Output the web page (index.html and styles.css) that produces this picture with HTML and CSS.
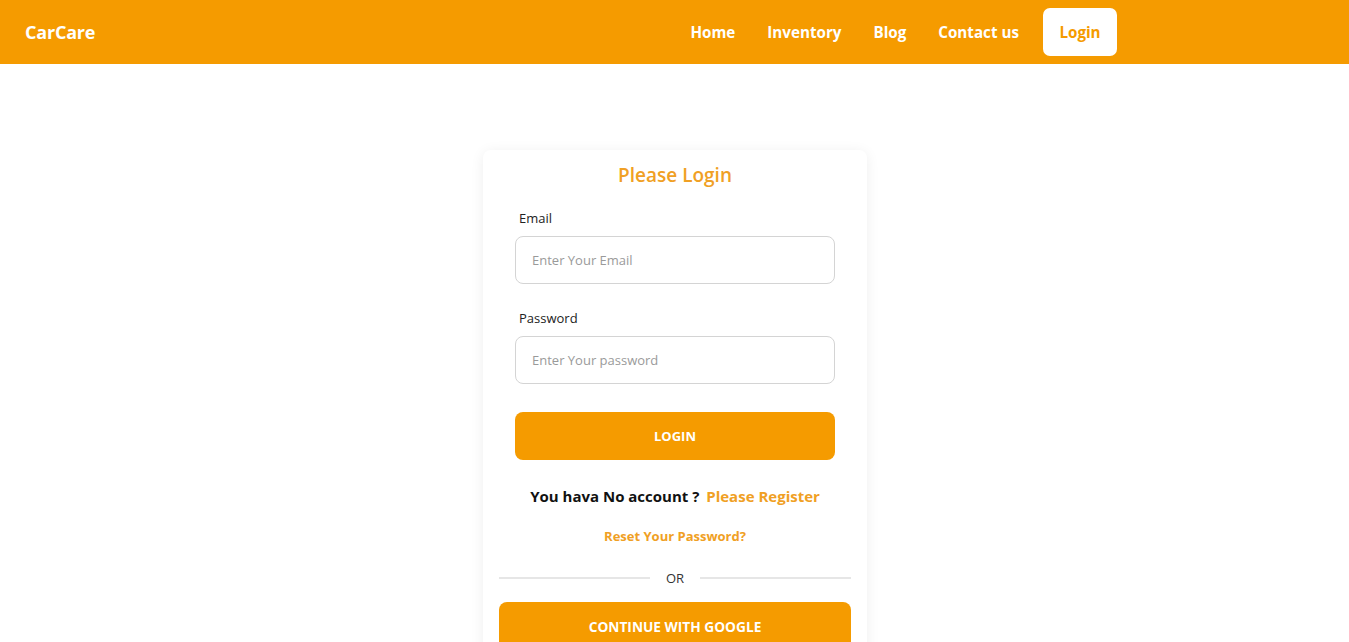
FILE: index.html
```html
<!DOCTYPE html>
<html>
<head>
<meta charset="utf-8">
<link rel="stylesheet" href="styles.css">
</head>
<body>
<header class="navbar">
  <div class="brand">CarCare</div>
  <nav class="nav">
    <a class="nav-link" href="#">Home</a>
    <a class="nav-link" href="#">Inventory</a>
    <a class="nav-link" href="#">Blog</a>
    <a class="nav-link" href="#">Contact us</a>
    <a class="nav-login" href="#">Login</a>
  </nav>
</header>
<main class="main">
  <section class="card">
    <h2 class="title">Please Login</h2>
    <form class="form">
      <label class="label">Email</label>
      <input class="input" type="email" placeholder="Enter Your Email">
      <label class="label label-pw">Password</label>
      <input class="input" type="password" placeholder="Enter Your password">
      <button class="btn btn-login" type="button">LOGIN</button>
    </form>
    <p class="register">You hava No account ? <a class="orange" href="#">Please Register</a></p>
    <p class="reset"><a class="orange" href="#">Reset Your Password?</a></p>
    <div class="divider"><span class="line"></span><span class="or">OR</span><span class="line"></span></div>
    <button class="btn btn-google" type="button">CONTINUE WITH GOOGLE</button>
  </section>
</main>
</body>
</html>
```
FILE: styles.css
```css
* { box-sizing: border-box; }
html, body { margin: 0; padding: 0; }
body {
  font-family: "Open Sans", "Noto Sans", sans-serif;
  background: #fff;
  color: #222;
  overflow: hidden;
  height: 642px;
}
.navbar {
  height: 64px;
  background: #f59b00;
  display: flex;
  align-items: center;
  padding: 0 0 0 25px;
}
.brand {
  color: #fff;
  font-weight: 700;
  font-size: 18px;
  letter-spacing: -0.2px;
}
.nav {
  margin-left: auto;
  margin-right: 232px;
  display: flex;
  align-items: center;
}
.nav-link {
  color: #fff;
  text-decoration: none;
  font-weight: 700;
  font-size: 15.2px;
  margin-right: 32px;
}
.nav-login {
  background: #fff;
  color: #f59b00;
  text-decoration: none;
  font-weight: 700;
  font-size: 15.2px;
  height: 48px;
  width: 74px;
  border-radius: 7px;
  display: flex;
  align-items: center;
  justify-content: center;
  margin-left: -8px;
}
.main {
  display: flex;
  justify-content: center;
  padding-top: 86px;
}
.card {
  width: 384px;
  margin-left: 1px;
  background: #fff;
  box-shadow: 0 2px 14px rgba(0,0,0,0.07);
  border-radius: 8px;
  padding: 12px 16px 40px;
  text-align: center;
}
.title {
  margin: 0;
  color: #f0a024;
  font-size: 19px;
  font-weight: 600;
  line-height: 26px;
}
.form {
  padding: 0 16px;
  display: flex;
  flex-direction: column;
  text-align: left;
  margin-top: 21px;
}
.label {
  font-size: 13px;
  color: #222;
  padding-left: 4px;
  line-height: 18px;
  margin-bottom: 9px;
}
.label-pw { margin-top: 25px; }
.input {
  height: 48px;
  border: 1px solid #d4d4d4;
  border-radius: 8px;
  padding: 0 16px;
  font-family: inherit;
  font-size: 13px;
  color: #222;
  outline: none;
}
.input::placeholder { color: #9a9a9a; }
.btn {
  border: none;
  background: #f59b00;
  color: #fff;
  font-family: inherit;
  font-weight: 700;
  font-size: 13px;
  border-radius: 8px;
  height: 48px;
  width: 100%;
}
.btn-login { margin-top: 28px; }
.register {
  margin: 26px 0 0;
  font-weight: 700;
  font-size: 15px;
  color: #111;
  line-height: 20px;
}
.orange { color: #f0a024; text-decoration: none; margin-left: 3px; }
.reset {
  margin: 21px 0 0;
  font-weight: 700;
  font-size: 13px;
  line-height: 18px;
}
.reset .orange { margin-left: 0; }
.divider {
  display: flex;
  align-items: center;
  margin-top: 24px;
}
.line {
  flex: 1;
  height: 2px;
  background: #e6e6e6;
}
.or {
  font-size: 13px;
  color: #333;
  padding: 0 16px;
  line-height: 18px;
}
.btn-google { margin-top: 15px; font-size: 13.7px; }
```
